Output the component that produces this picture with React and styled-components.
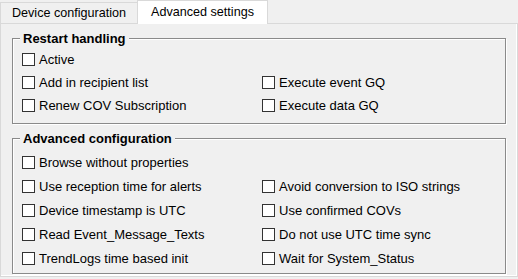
import React from 'react';
import styled, { createGlobalStyle } from 'styled-components';

const GlobalStyle = createGlobalStyle`
  html, body {
    margin: 0;
    padding: 0;
    background: #f0f0f0;
  }
  body {
    font-family: 'Liberation Sans', Arial, sans-serif;
    font-size: 13px;
    color: #000;
  }
`

const Window = styled.div`
  width: 518px;
  height: 279px;
  background: #f0f0f0;
  box-sizing: border-box;
`

const TabStrip = styled.div`
  display: flex;
  align-items: flex-end;
  height: 23px;
  position: relative;
  z-index: 1;
`

const Tab = styled.div`
  box-sizing: border-box;
  display: flex;
  align-items: center;
  justify-content: center;
  width: ${p => (p.$active ? '131px' : '137px')};
  height: ${p => (p.$active ? '24px' : '21px')};
  margin-bottom: ${p => (p.$active ? '-1px' : '0')};
  padding-bottom: ${p => (p.$active ? '2px' : '0')};
  font-size: 12.6px;
  background: ${p => (p.$active ? '#fff' : '#f0f0f0')};
  border: 1px solid #d9d9d9;
  border-bottom: none;
  border-right: ${p => (p.$active ? '1px solid #d9d9d9' : 'none')};
  white-space: nowrap;
`

const Panel = styled.div`
  box-sizing: border-box;
  height: 254px;
  border: 1px solid #d9d9d9;
  box-shadow: inset -1px -1px 0 #fff;
  padding: 7px 11px 0 11px;
  display: flex;
  flex-direction: column;
  gap: 7px;
`

const Group = styled.fieldset`
  margin: 0;
  padding: 0 0 ${p => p.$padBottom}px 0;
  min-inline-size: 0;
  width: 494px;
  box-sizing: border-box;
  border: 1px solid #8a8a8a;
  box-shadow: inset 1px 1px 0 #fff, 1px 1px 0 #fff;
`

const Title = styled.legend`
  margin-left: 7px;
  padding: 0 3px;
  font-weight: 700;
  font-size: 13px;
  line-height: 15px;
  background: #f0f0f0;
`

const Options = styled.div`
  display: grid;
  grid-template-columns: 240px 1fr;
  grid-auto-rows: ${p => p.$row}px;
  padding: ${p => p.$padTop}px 0 0 9px;
`

const Option = styled.label`
  display: flex;
  align-items: center;
  gap: 4px;
  white-space: nowrap;
  line-height: 15px;
`

const Box = styled.span`
  box-sizing: border-box;
  width: 13px;
  height: 13px;
  flex: none;
  background: #fff;
  border: 1px solid #333;
`

const Empty = styled.span``

const restart = [
  ['Active', null],
  ['Add in recipient list', 'Execute event GQ'],
  ['Renew COV Subscription', 'Execute data GQ'],
];

const advanced = [
  ['Browse without properties', null],
  ['Use reception time for alerts', 'Avoid conversion to ISO strings'],
  ['Device timestamp is UTC', 'Use confirmed COVs'],
  ['Read Event_Message_Texts', 'Do not use UTC time sync'],
  ['TrendLogs time based init', 'Wait for System_Status'],
];

const Check = ({ label }) => (
  label ? (
    <Option>
      <Box />
      <span>{label}</span>
    </Option>
  ) : <Empty />
);

const Section = ({ title, rows, row, padTop, padBottom }) => (
  <Group $padBottom={padBottom}>
    <Title>{title}</Title>
    <Options $row={row} $padTop={padTop}>
      {rows.map(([a, b], i) => (
        <React.Fragment key={i}>
          <Check label={a} />
          <Check label={b} />
        </React.Fragment>
      ))}
    </Options>
  </Group>
);

const App = () => {
  return (
    <Window>
      <GlobalStyle />
      <TabStrip>
        <Tab>Device configuration</Tab>
        <Tab $active>Advanced settings</Tab>
      </TabStrip>
      <Panel>
        <Section title="Restart handling" rows={restart} row={23} padTop={2} padBottom={6} />
        <Section title="Advanced configuration" rows={advanced} row={24} padTop={4} padBottom={3} />
      </Panel>
    </Window>
  )
}

export default App;
